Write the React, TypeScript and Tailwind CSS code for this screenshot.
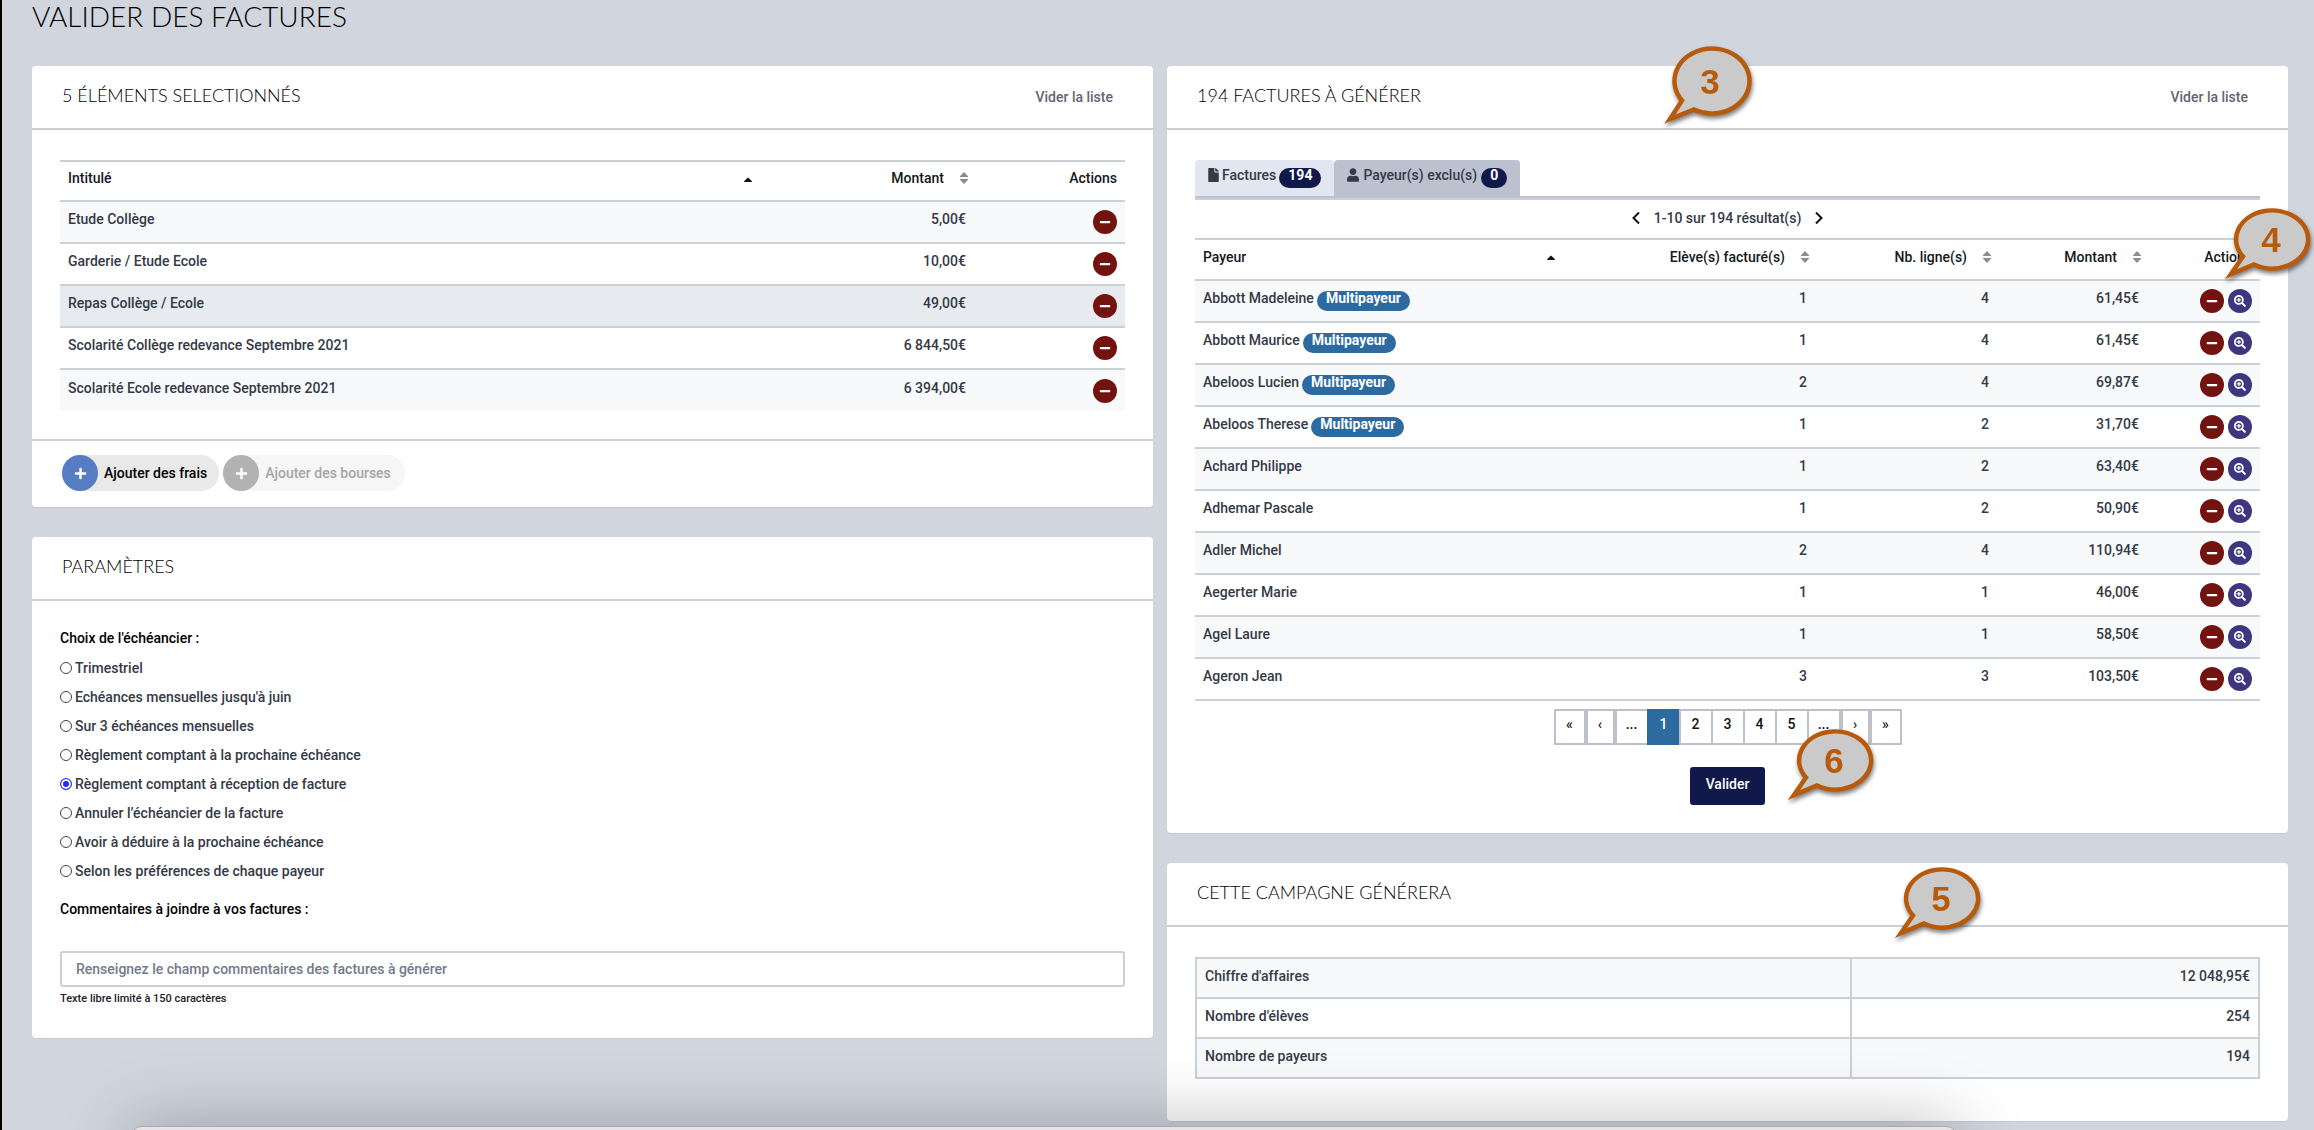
import React from "react";
import { FaFile, FaUser, FaPlus, FaMinus, FaSearchPlus } from "react-icons/fa";

const fees = [
  ["Etude Collège", "5,00€"],
  ["Garderie / Etude Ecole", "10,00€"],
  ["Repas Collège / Ecole", "49,00€"],
  ["Scolarité Collège redevance Septembre 2021", "6 844,50€"],
  ["Scolarité Ecole redevance Septembre 2021", "6 394,00€"],
];

const payers: [string, boolean, number, number, string][] = [
  ["Abbott Madeleine", true, 1, 4, "61,45€"],
  ["Abbott Maurice", true, 1, 4, "61,45€"],
  ["Abeloos Lucien", true, 2, 4, "69,87€"],
  ["Abeloos Therese", true, 1, 2, "31,70€"],
  ["Achard Philippe", false, 1, 2, "63,40€"],
  ["Adhemar Pascale", false, 1, 2, "50,90€"],
  ["Adler Michel", false, 2, 4, "110,94€"],
  ["Aegerter Marie", false, 1, 1, "46,00€"],
  ["Agel Laure", false, 1, 1, "58,50€"],
  ["Ageron Jean", false, 3, 3, "103,50€"],
];

const schedules = [
  "Trimestriel",
  "Echéances mensuelles jusqu'à juin",
  "Sur 3 échéances mensuelles",
  "Règlement comptant à la prochaine échéance",
  "Règlement comptant à réception de facture",
  "Annuler l’échéancier de la facture",
  "Avoir à déduire à la prochaine échéance",
  "Selon les préférences de chaque payeur",
];

const totals = [
  ["Chiffre d'affaires", "12 048,95€"],
  ["Nombre d'élèves", "254"],
  ["Nombre de payeurs", "194"],
];

function Panel({ title, clear, children }: { title: string; clear?: boolean; children: React.ReactNode }) {
  return (
    <section className="relative rounded bg-white shadow-[0_1px_1px_#c5c9d0]">
      <header className="flex h-16 items-center justify-between border-b-2 border-[#cbd0d5] pr-10 pl-[30px]">
        <h2 className="pb-1 font-[Lato] text-lg font-light text-black">{title}</h2>
        {clear && (
          <a href="#vider" className="text-[#5f6673]">
            Vider la liste
          </a>
        )}
      </header>
      {children}
    </section>
  );
}

function SortAsc() {
  return (
    <svg viewBox="0 0 8 6" className="h-[6px] w-2" aria-hidden="true">
      <path d="M4 0.5 8 4.2 7.5 5H0.5L0 4.2Z" fill="#111" />
    </svg>
  );
}

function SortBoth() {
  return (
    <svg viewBox="0 0 8 12" className="h-3 w-2" aria-hidden="true">
      <path d="M4 0 8 4.2V5H0V4.2ZM4 12 8 7.8V7H0V7.8Z" fill="#8b8d91" />
    </svg>
  );
}

function SortableHeader({ children, className }: { children: string; className: string }) {
  return (
    <th className={`pb-1.5 font-medium ${className}`}>
      <span className="-mr-0.5 flex items-center justify-end gap-4">
        {children} <SortBoth />
      </span>
    </th>
  );
}

function RemoveButton() {
  return (
    <button type="button" aria-label="Retirer" className="flex size-6 items-center justify-center rounded-full bg-[#731310] text-white">
      <FaMinus size={12} />
    </button>
  );
}

function Callout({ n, className, tall }: { n: number; className: string; tall?: boolean }) {
  return (
    <svg
      viewBox={tall ? "0 0 92 88" : "0 0 92 80"}
      className={`w-[92px] drop-shadow-[1px_3px_2px_rgba(0,0,0,0.5)] ${tall ? "h-[88px]" : "h-20"} ${className}`}
      role="img"
      aria-label={String(n)}
    >
      <path
        d={
          tall
            ? "M18 56.5A37.5 32.5 0 1 1 30 65.5L6 75Z"
            : "M18 50.5A36 29 0 1 1 29 58.5L6 68Z"
        }
        fill="#cacaca"
        stroke="#b85a0b"
        strokeWidth="4.5"
      />
      <text
        x="46"
        y={tall ? 50 : 46}
        textAnchor="middle"
        className="fill-[#b85a0b] font-['Liberation_Sans'] text-[35px] font-bold"
      >
        {n}
      </text>
    </svg>
  );
}

function PageButton({
  children,
  width = "w-[34px]",
  active,
  apart,
}: {
  children: string;
  width?: string;
  active?: boolean;
  apart?: boolean;
}) {
  const look = active ? "bg-[#2d6a9f] border-[#2d6a9f] text-white" : "bg-white border-[#bec0cc] text-[#111]";
  return (
    <button type="button" className={`h-9 border-2 pb-1.5 ${apart ? "" : "-ml-0.5"} ${width} ${look}`}>
      {children}
    </button>
  );
}

export default function App() {
  return (
    <div className="relative min-h-screen overflow-hidden border-l-2 border-black bg-[#d1d5de] pr-[26px] pb-[10px] pl-[30px] font-[Roboto,sans-serif] text-sm font-medium text-[#343a46]">
      <h1 className="flex h-[66px] items-start font-[Lato] text-[28px] leading-8 font-light text-black">
        VALIDER DES FACTURES
      </h1>
      <div className="grid grid-cols-2 items-start gap-[14px]">
        <div className="flex flex-col gap-[30px]">
          <Panel title="5 ÉLÉMENTS SELECTIONNÉS" clear>
            <div className="px-7 pt-[30px] pb-7">
              <table className="w-full">
                <thead>
                  <tr className="h-10 border-y-2 border-[#cbd0d5] text-[#15181d]">
                    <th className="px-2 pb-1.5 text-left font-medium">Intitulé</th>
                    <th className="w-10 pb-0.5">
                      <SortAsc />
                    </th>
                    <SortableHeader className="w-[182px]">Montant</SortableHeader>
                    <th className="w-[159px] px-2 pb-1.5 text-right font-medium">Actions</th>
                  </tr>
                </thead>
                <tbody>
                  {fees.map(([name, amount], i) => (
                    <tr
                      key={name}
                      className={`h-[42px] border-[#cbd0d5] ${i < 4 ? "border-b-2" : ""} ${i === 2 ? "bg-[#e7ebf0]" : i % 2 ? "bg-white" : "bg-[#f8f9fb]"}`}
                    >
                      <td colSpan={2} className="px-2 pb-1.5">{name}</td>
                      <td className="pb-1.5 text-right">{amount}</td>
                      <td className="px-2">
                        <div className="flex justify-end">
                          <RemoveButton />
                        </div>
                      </td>
                    </tr>
                  ))}
                </tbody>
              </table>
            </div>
            <footer className="flex gap-1 border-t-2 border-[#cbd0d5] px-[30px] pt-[14px] pb-4">
              <button type="button" className="flex h-9 items-center gap-1.5 rounded-full bg-[#e9e9e9] pr-3 text-black">
                <span className="flex size-9 items-center justify-center rounded-full bg-[#567cc2] text-white">
                  <FaPlus size={13} />
                </span>
                Ajouter des frais
              </button>
              <button type="button" disabled className="flex h-9 items-center gap-1.5 rounded-full bg-[#f6f6f6] pr-3.5 text-[#a5a5a5]">
                <span className="flex size-9 items-center justify-center rounded-full bg-[#b2b2b2] text-white">
                  <FaPlus size={13} />
                </span>
                Ajouter des bourses
              </button>
            </footer>
          </Panel>

          <Panel title="PARAMÈTRES">
            <div className="px-7 pt-[27px] pb-[31px]">
              <fieldset>
                <legend className="leading-5 text-black">Choix de l'échéancier :</legend>
                <div className="mt-[5px]">
                  {schedules.map((label, i) => (
                    <label key={label} className="flex h-[29px] items-center gap-[3px]">
                      <input
                        type="radio"
                        name="echeancier"
                        defaultChecked={i === 4}
                        className="size-3 appearance-none rounded-full border border-[#444] bg-white checked:border-[#2430e0] checked:bg-[#2430e0] checked:shadow-[inset_0_0_0_2px_white]"
                      />
                      {label}
                    </label>
                  ))}
                </div>
              </fieldset>
              <label htmlFor="comments" className="mt-[14px] block leading-5 text-black">
                Commentaires à joindre à vos factures :
              </label>
              <input
                id="comments"
                type="text"
                placeholder="Renseignez le champ commentaires des factures à générer"
                className="mt-8 block h-9 w-full rounded-[3px] border-2 border-[#cbd0d5] px-3.5 placeholder:text-[#737a8a]"
              />
              <p className="mt-1 text-[11px] leading-4 text-[#1d2026]">Texte libre limité à 150 caractères</p>
            </div>
          </Panel>
        </div>

        <div className="flex flex-col gap-[30px]">
          <Panel title="194 FACTURES À GÉNÉRER" clear>
            <div className="px-7 pt-[30px] pb-7">
              <div className="flex border-b-2 border-[#bbc1cf]">
                <button type="button" className="flex h-9 items-center gap-[3px] rounded-t bg-[#e2e6f1] px-[13px] pb-1.5">
                  <FaFile className="h-3.5 w-[11px]" />
                  Factures
                  <span className="mt-1.5 h-5 rounded-full bg-[#11194a] px-[9px] leading-[14px] font-bold text-white">194</span>
                </button>
                <button type="button" className="flex h-9 items-center gap-1 rounded-t bg-[#bbc1cf] px-[13px] pb-1.5">
                  <FaUser className="h-3.5 w-3" />
                  Payeur(s) exclu(s)
                  <span className="mt-1.5 h-5 rounded-full bg-[#11194a] px-[9px] leading-[14px] font-bold text-white">0</span>
                </button>
              </div>
              <div className="flex h-10 items-center justify-center gap-3.5 border-t-2 border-[#cbd0d5] pb-0.5">
                <button type="button" aria-label="Résultats précédents">
                  <svg viewBox="0 0 8 12" className="h-3 w-2" fill="none" stroke="#111" strokeWidth="2">
                    <path d="M7 0.5 1.5 6 7 11.5" />
                  </svg>
                </button>
                <span>1-10 sur 194 résultat(s)</span>
                <button type="button" aria-label="Résultats suivants">
                  <svg viewBox="0 0 8 12" className="h-3 w-2" fill="none" stroke="#111" strokeWidth="2">
                    <path d="M1 0.5 6.5 6 1 11.5" />
                  </svg>
                </button>
              </div>
              <table className="w-full">
                <thead>
                  <tr className="h-[41px] border-y-2 border-[#cbd0d5] text-[#15181d]">
                    <th className="px-2 pb-1.5 text-left font-medium">Payeur</th>
                    <th className="w-5 pb-1">
                      <SortAsc />
                    </th>
                    <SortableHeader className="w-[240px]">Elève(s) facturé(s)</SortableHeader>
                    <SortableHeader className="w-[182px]">Nb. ligne(s)</SortableHeader>
                    <SortableHeader className="w-[150px]">Montant</SortableHeader>
                    <th className="w-[121px] px-2 pb-1.5 text-right font-medium">Actions</th>
                  </tr>
                </thead>
                <tbody>
                  {payers.map(([name, multi, students, lines, amount], i) => (
                    <tr key={name} className={`h-[42px] border-b-2 border-[#cbd0d5] ${i % 2 ? "bg-white" : "bg-[#f8f9fb]"}`}>
                      <td colSpan={2} className="px-2 pb-1.5">
                        <span className="flex items-center gap-[3px]">
                          {name}
                          {multi && (
                            <span className="mt-1.5 h-5 rounded-full bg-[#2d6a9f] px-[9px] leading-[14px] font-bold text-white">Multipayeur</span>
                          )}
                        </span>
                      </td>
                      <td className="pb-1.5 text-right">{students}</td>
                      <td className="pb-1.5 text-right">{lines}</td>
                      <td className="pb-1.5 text-right">{amount}</td>
                      <td className="px-2">
                        <div className="flex justify-end gap-1">
                          <RemoveButton />
                          <button type="button" aria-label="Voir le détail" className="flex size-6 items-center justify-center rounded-full bg-[#3e3780] text-white">
                            <FaSearchPlus size={12} />
                          </button>
                        </div>
                      </td>
                    </tr>
                  ))}
                </tbody>
              </table>
              <nav aria-label="Pagination" className="mt-2 flex justify-center">
                <PageButton apart width="w-8">«</PageButton>
                <PageButton apart width="w-[29px]">‹</PageButton>
                <PageButton apart>...</PageButton>
                <PageButton active>1</PageButton>
                <PageButton>2</PageButton>
                <PageButton>3</PageButton>
                <PageButton>4</PageButton>
                <PageButton>5</PageButton>
                <PageButton>...</PageButton>
                <PageButton apart width="w-[29px]">›</PageButton>
                <PageButton apart width="w-8">»</PageButton>
              </nav>
              <div className="mt-[22px] flex justify-center">
                <button type="button" className="h-[38px] rounded-[3px] bg-[#11194a] px-4 pb-1 text-white">
                  Valider
                </button>
              </div>
            </div>
            <Callout n={3} tall className="absolute -top-[22px] right-[532px]" />
            <Callout n={4} className="absolute top-[140px] -right-[29px]" />
            <Callout n={6} className="absolute right-[408px] bottom-[26px]" />
          </Panel>

          <Panel title="CETTE CAMPAGNE GÉNÉRERA">
            <div className="px-7 pt-[30px] pb-[42px]">
              <table className="w-full">
                <tbody>
                  {totals.map(([label, value], i) => (
                    <tr key={label} className={`h-10 ${i % 2 ? "bg-white" : "bg-[#f8f9fb]"}`}>
                      <th scope="row" className="border-2 border-[#cbd0d5] px-2 pb-1 text-left font-medium">{label}</th>
                      <td className="w-[408px] border-2 border-[#cbd0d5] px-2 pb-1 text-right">{value}</td>
                    </tr>
                  ))}
                </tbody>
              </table>
            </div>
            <Callout n={5} className="absolute top-0.5 right-[301px]" />
          </Panel>
        </div>
      </div>
      <div className="pointer-events-none absolute right-[356px] -bottom-[60px] left-32 h-[65px] rounded-xl border border-[#aaa9ae] bg-[#e6e3e6] shadow-[0_0_70px_rgba(0,0,0,0.28)]" />
    </div>
  );
}
